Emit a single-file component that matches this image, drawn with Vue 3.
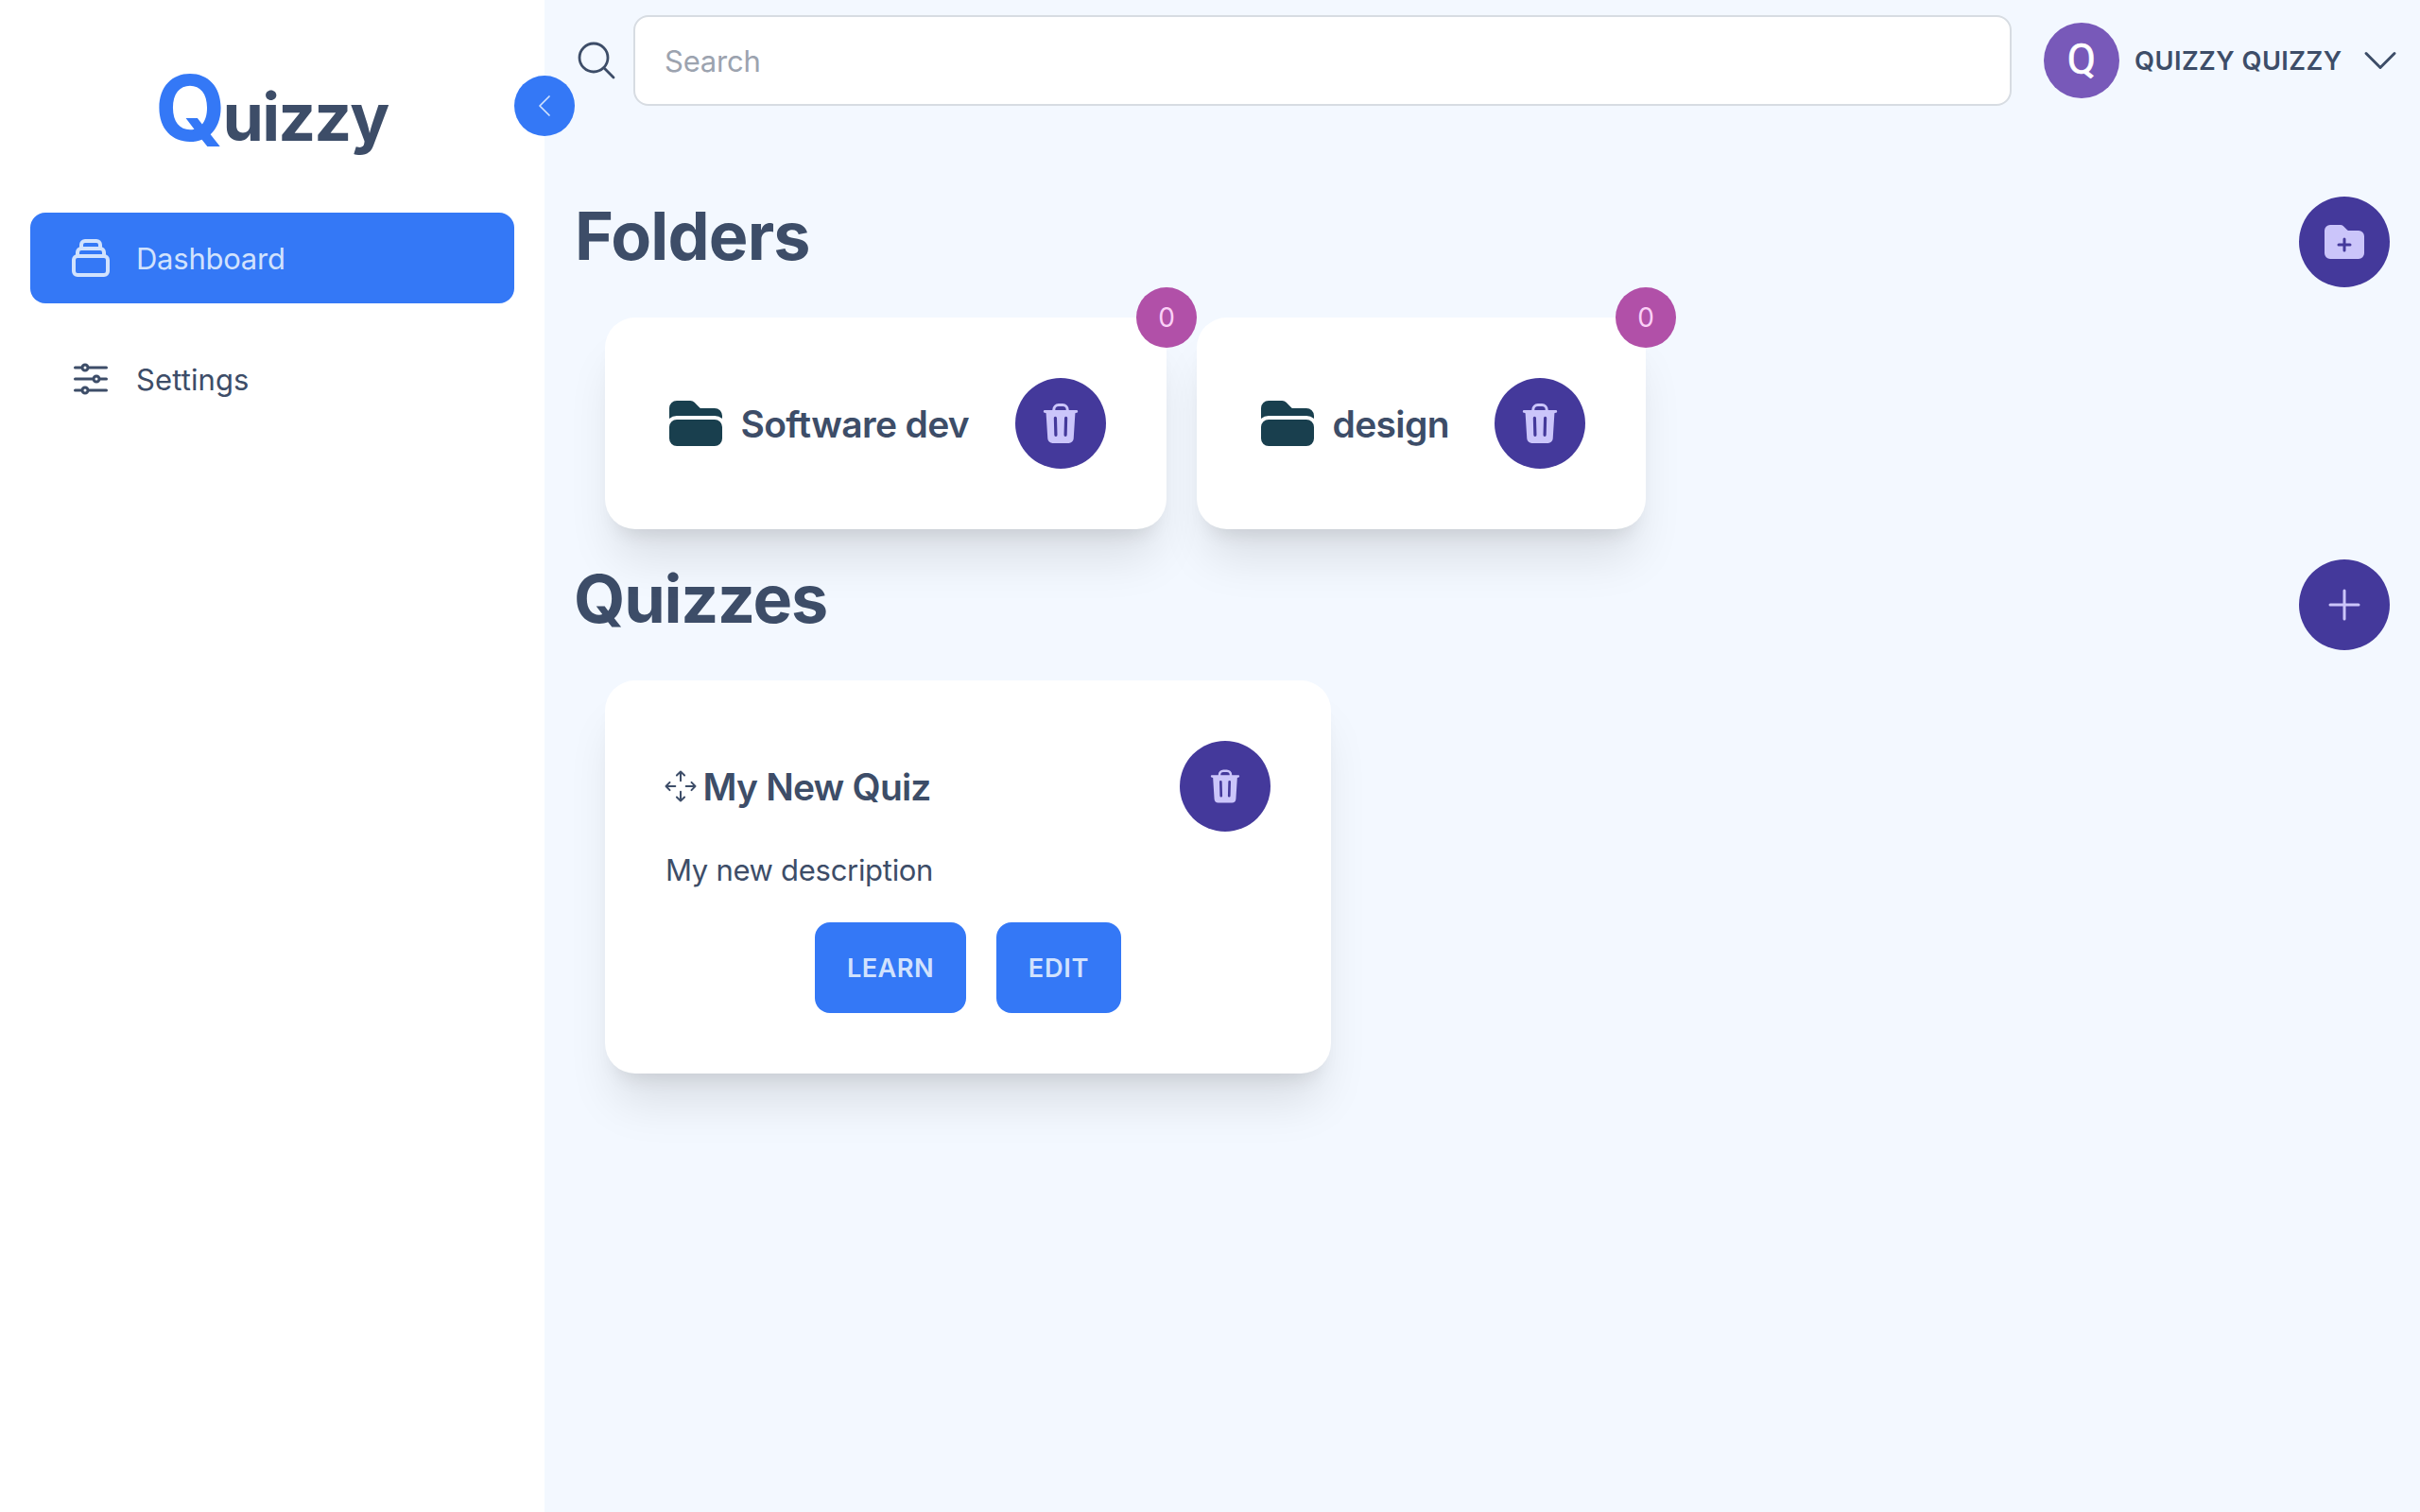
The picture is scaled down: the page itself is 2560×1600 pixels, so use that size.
<script setup>
import { ref } from 'vue'

const search = ref('')

const nav = [
  {
    label: 'Dashboard',
    active: true,
    stroke: 2,
    icon: 'M19 11H5m14 0a2 2 0 012 2v6a2 2 0 01-2 2H5a2 2 0 01-2-2v-6a2 2 0 012-2m14 0V9a2 2 0 00-2-2M5 11V9a2 2 0 012-2m0 0V5a2 2 0 012-2h6a2 2 0 012 2v2M7 7h10',
  },
  {
    label: 'Settings',
    active: false,
    stroke: 1.5,
    icon: 'M10.5 6h9.75M10.5 6a1.5 1.5 0 1 1-3 0m3 0a1.5 1.5 0 1 0-3 0M3.75 6H7.5m3 12h9.75m-9.75 0a1.5 1.5 0 0 1-3 0m3 0a1.5 1.5 0 0 0-3 0m-3.75 0H7.5m9-6h3.75m-3.75 0a1.5 1.5 0 0 1-3 0m3 0a1.5 1.5 0 0 0-3 0m-9.75 0h9.75',
  },
]

const folders = [
  { name: 'Software dev', count: 0, size: 'wide' },
  { name: 'design', count: 0, size: 'narrow' },
]
</script>

<template>
  <div class="app">
    <aside class="sidebar">
      <div class="logo"><span class="logo-q">Q</span><span class="logo-rest">uizzy</span></div>
      <nav class="nav">
        <a v-for="item in nav" :key="item.label" class="nav-item" :class="{ active: item.active }">
          <svg class="icon" viewBox="0 0 24 24" :stroke-width="item.stroke"><path :d="item.icon" /></svg>
          <span>{{ item.label }}</span>
        </a>
      </nav>
      <button class="toggle" aria-label="Collapse">
        <svg class="icon small" viewBox="0 0 24 24" stroke-width="1.3"><path d="M15.75 19.5 8.25 12l7.5-7.5" /></svg>
      </button>
    </aside>

    <main class="main">
      <header class="topbar">
        <svg class="icon search-icon" viewBox="0 0 24 24" stroke-width="1.4">
          <path d="m21 21-5.197-5.197m0 0A7.5 7.5 0 1 0 5.196 5.196a7.5 7.5 0 0 0 10.607 10.607Z" />
        </svg>
        <input v-model="search" class="search" type="text" placeholder="Search" />
        <div class="user">
          <span class="avatar">Q</span>
          <span class="user-name">QUIZZY QUIZZY</span>
          <svg class="icon" viewBox="0 0 24 24" stroke-width="1.5"><path d="m19.5 8.25-7.5 7.5-7.5-7.5" /></svg>
        </div>
      </header>

      <section class="section">
        <div class="section-head">
          <h1 class="title folders-title">Folders</h1>
          <button class="round" aria-label="Add folder">
            <svg class="icon solid" viewBox="0 0 24 24">
              <path d="M19.5 21a3 3 0 0 0 3-3V9a3 3 0 0 0-3-3h-5.379a.75.75 0 0 1-.53-.22L11.47 3.66A2.25 2.25 0 0 0 9.879 3H4.5a3 3 0 0 0-3 3v12a3 3 0 0 0 3 3h15Zm-6.75-10.5a.75.75 0 0 0-1.5 0v2.25H9a.75.75 0 0 0 0 1.5h2.25v2.25a.75.75 0 0 0 1.5 0v-2.25H15a.75.75 0 0 0 0-1.5h-2.25V10.5Z" />
            </svg>
          </button>
        </div>
        <div class="cards">
          <article v-for="f in folders" :key="f.name" class="card folder" :class="f.size">
            <svg class="icon solid folder-icon" viewBox="0 0 24 24">
              <path d="M19.5 21a3 3 0 0 0 3-3v-4.5a3 3 0 0 0-3-3h-15a3 3 0 0 0-3 3V18a3 3 0 0 0 3 3h15ZM1.5 10.146V6a3 3 0 0 1 3-3h5.379a2.25 2.25 0 0 1 1.59.659l2.122 2.121c.14.141.331.22.53.22H19.5a3 3 0 0 1 3 3v1.146A4.483 4.483 0 0 0 19.5 9h-15a4.483 4.483 0 0 0-3 1.146Z" />
            </svg>
            <h2 class="card-title">{{ f.name }}</h2>
            <button class="round push" aria-label="Delete folder">
              <svg class="trash" viewBox="0 0 48 48">
                <path class="trash-handle" d="M16.8 11.5V9.5a5 5 0 0 1 5-5h4.4a5 5 0 0 1 5 5v2" />
                <path class="trash-body" d="M7.2 10h33.6a1.3 1.3 0 0 1 0 2.8l-1.4.4-1.7 27a5.2 5.2 0 0 1-5.2 4.8h-17a5.2 5.2 0 0 1-5.2-4.8l-1.7-27-1.4-.4a1.3 1.3 0 0 1 0-2.8Z" />
                <path class="trash-slots" d="m18.4 18.3.5 18M29.6 18.3l-.5 18" />
              </svg>
            </button>
            <span class="badge">{{ f.count }}</span>
          </article>
        </div>
      </section>

      <section class="section">
        <div class="section-head">
          <h1 class="title quizzes-title">Quizzes</h1>
          <button class="round" aria-label="Add quiz">
            <svg class="icon" viewBox="0 0 24 24" stroke-width="1.5"><path d="M12 4.5v15m7.5-7.5h-15" /></svg>
          </button>
        </div>
        <div class="cards">
          <article class="card quiz">
            <div class="quiz-head">
              <svg class="move" viewBox="4 4 32 32">
                <path d="M20 14.3V4.5M15.9 8.5 20 4.5l4.1 4M20 25.7v9.8M15.9 31.5l4.1 4 4.1-4M14.3 20H4.5M8.5 15.9l-4 4.1 4 4.1M25.7 20h9.8M31.5 15.9l4 4.1-4 4.1" />
              </svg>
              <h2 class="card-title quiz-title">My New Quiz</h2>
              <button class="round push" aria-label="Delete quiz">
                <svg class="trash trash-small" viewBox="0 0 48 48">
                  <path class="trash-handle" d="M16.8 11.5V9.5a5 5 0 0 1 5-5h4.4a5 5 0 0 1 5 5v2" />
                  <path class="trash-body" d="M7.2 10h33.6a1.3 1.3 0 0 1 0 2.8l-1.4.4-1.7 27a5.2 5.2 0 0 1-5.2 4.8h-17a5.2 5.2 0 0 1-5.2-4.8l-1.7-27-1.4-.4a1.3 1.3 0 0 1 0-2.8Z" />
                  <path class="trash-slots" d="m18.4 18.3.5 18M29.6 18.3l-.5 18" />
                </svg>
              </button>
            </div>
            <p class="description">My new description</p>
            <div class="actions">
              <button class="btn learn">LEARN</button>
              <button class="btn edit">EDIT</button>
            </div>
          </article>
        </div>
      </section>
    </main>
  </div>
</template>

<style>
body {
  margin: 0;
  background: #f3f8ff;
}
</style>

<style scoped>
* {
  box-sizing: border-box;
}
.app {
  display: flex;
  height: 1600px;
  font-family: Inter, "Liberation Sans", sans-serif;
  font-size: 31px;
  color: #3d4d68;
  background: #f3f8ff;
}
h1,
h2,
p {
  margin: 0;
}
button {
  border: 0;
  padding: 0;
  font-family: inherit;
}
.icon {
  width: 48px;
  height: 48px;
  flex: none;
  fill: none;
  stroke: currentColor;
  stroke-linecap: round;
  stroke-linejoin: round;
}
.icon.small {
  width: 32px;
  height: 32px;
}
.icon.solid {
  fill: currentColor;
  fill-rule: evenodd;
  stroke: none;
}

.sidebar {
  position: relative;
  width: 576px;
  flex: none;
  background: #fff;
}
.logo {
  display: flex;
  align-items: baseline;
  height: 225px;
  padding: 66px 0 0 164px;
  font-weight: 700;
}
.logo-q {
  font-size: 96px;
  line-height: 96px;
  letter-spacing: -3px;
  color: #3478f6;
}
.logo-rest {
  font-size: 69.8px;
  line-height: 70px;
  letter-spacing: -1.9px;
}
.nav {
  display: flex;
  flex-direction: column;
  gap: 32px;
  padding: 0 32px;
}
.nav-item {
  display: flex;
  align-items: center;
  gap: 24px;
  height: 96px;
  padding: 0 40px;
  border-radius: 16px;
  letter-spacing: 0.1px;
}
.nav-item.active {
  background: #3478f6;
  color: #d1e2fd;
  letter-spacing: -0.25px;
}
.toggle {
  position: absolute;
  top: 80px;
  right: -32px;
  width: 64px;
  height: 64px;
  border-radius: 50%;
  display: flex;
  align-items: center;
  justify-content: center;
  background: #3478f6;
  color: #d1e2fd;
}

.main {
  flex: 1;
  padding: 16px 32px 0;
}
.topbar {
  display: flex;
  align-items: center;
  height: 96px;
  margin: 0 -14px 96px 0;
}
.search-icon {
  margin: 0 1px 0 -1px;
}
.search {
  flex: 1;
  min-width: 0;
  height: 96px;
  margin: 0 34px 0 14px;
  padding: 0 31px;
  border: 2px solid #d7dce2;
  border-radius: 16px;
  background: #fff;
  font: 400 31px Inter, "Liberation Sans", sans-serif;
  letter-spacing: -0.2px;
  color: #3d4d68;
  outline: none;
}
.search::placeholder {
  color: #9ca3af;
  opacity: 1;
}
.user {
  display: flex;
  align-items: center;
  gap: 16px;
}
.avatar {
  width: 80px;
  height: 80px;
  border-radius: 50%;
  background: #7859b9;
  color: #fff;
  font: 400 44px/78px Roboto, sans-serif;
  -webkit-text-stroke: 0.6px #fff;
  text-align: center;
}
.user-name {
  width: 220px;
  font-size: 27.2px;
  font-weight: 600;
  letter-spacing: 0.45px;
  white-space: nowrap;
}

.section {
  margin-bottom: 32px;
}
.section-head {
  display: flex;
  justify-content: space-between;
  align-items: flex-start;
  height: 96px;
}
.title {
  font-size: 70px;
  line-height: 83px;
  font-weight: 700;
}
.folders-title {
  letter-spacing: -0.83px;
}
.quizzes-title {
  margin-left: -1px;
  letter-spacing: -1.24px;
}
.round {
  width: 96px;
  height: 96px;
  flex: none;
  border-radius: 50%;
  display: flex;
  align-items: center;
  justify-content: center;
  background: #44399b;
  color: #cbc5fa;
}
.push {
  margin-left: auto;
}
.cards {
  display: flex;
  gap: 32px;
  padding: 32px 0 0 32px;
}
.card {
  position: relative;
  padding: 64px;
  border-radius: 32px;
  background: #fff;
  box-shadow: 0 40px 50px -10px rgba(0, 0, 0, 0.1), 0 16px 20px -12px rgba(0, 0, 0, 0.1);
}
.folder {
  display: flex;
  align-items: center;
  height: 224px;
}
.wide {
  width: 594px;
}
.narrow {
  width: 475px;
}
.folder-icon {
  width: 64px;
  height: 64px;
  margin-right: 15.5px;
  color: #193f4e;
}
.card-title {
  font-size: 39px;
  line-height: 57px;
  font-weight: 600;
  letter-spacing: -0.65px;
  white-space: nowrap;
}
.quiz-title {
  letter-spacing: -0.81px;
}
.badge {
  position: absolute;
  top: -32px;
  right: -32px;
  z-index: 1;
  width: 64px;
  height: 64px;
  border-radius: 50%;
  background: #b150a8;
  color: #fbd0f7;
  font-size: 28px;
  line-height: 64px;
  text-align: center;
}
.trash {
  width: 48px;
  height: 48px;
}
.trash-small {
  width: 40px;
  height: 40px;
}
.trash-handle {
  fill: none;
  stroke: #cbc5fa;
  stroke-width: 3;
}
.trash-body {
  fill: #cbc5fa;
}
.trash-slots {
  fill: none;
  stroke: #44399b;
  stroke-width: 3.2;
  stroke-linecap: round;
}
.quiz {
  width: 768px;
}
.quiz-head {
  display: flex;
  align-items: center;
}
.move {
  width: 32px;
  height: 32px;
  margin-right: 7.5px;
  overflow: visible;
  fill: none;
  stroke: #3d4d68;
  stroke-width: 2;
  stroke-linecap: round;
  stroke-linejoin: round;
}
.description {
  margin-top: 16px;
  line-height: 49px;
  height: 48px;
  letter-spacing: -0.3px;
}
.actions {
  display: flex;
  justify-content: center;
  gap: 32px;
  margin-top: 32px;
}
.btn {
  height: 96px;
  border-radius: 16px;
  background: #3478f6;
  color: #d1e2fd;
  font-size: 27.2px;
  font-weight: 600;
}
.learn {
  width: 160px;
  letter-spacing: 0.41px;
}
.edit {
  width: 132px;
  letter-spacing: 0.79px;
}
</style>
